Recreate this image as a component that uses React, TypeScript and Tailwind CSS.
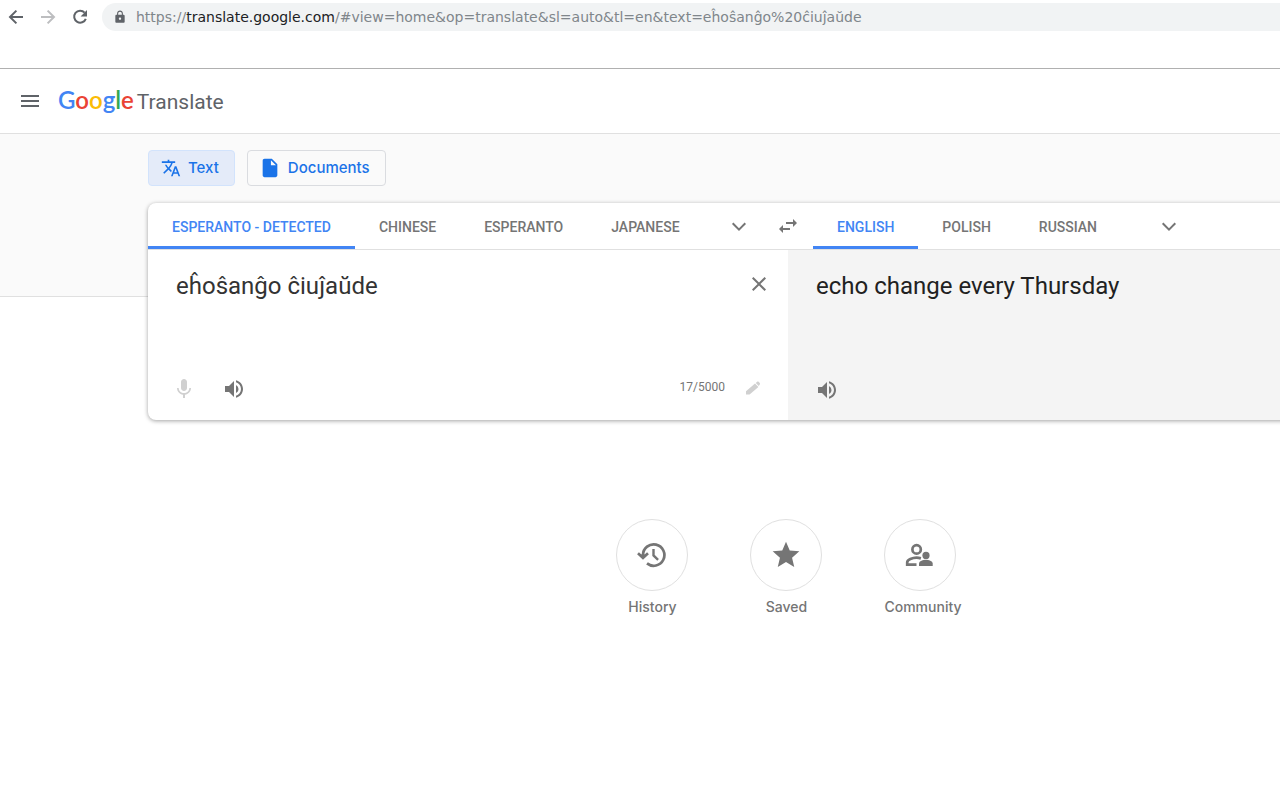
import React, { useState } from 'react';
import clsx from 'clsx';
import {
  MdClose,
  MdInsertDriveFile,
  MdLock,
  MdMenu,
  MdMic,
  MdStar,
  MdSwapHoriz,
  MdTranslate,
  MdVolumeUp,
} from 'react-icons/md';

const MAX_CHARS = 5000;

const sourceLanguages = ['Esperanto - detected', 'Chinese', 'Esperanto', 'Japanese'];
const targetLanguages = ['English', 'Polish', 'Russian'];

const logoLetters = [
  { char: 'G', color: 'text-[#4285f4]' },
  { char: 'o', color: 'text-[#ea4335]' },
  { char: 'o', color: 'text-[#fbbc05]' },
  { char: 'g', color: 'text-[#4285f4]' },
  { char: 'l', color: 'text-[#34a853]' },
  { char: 'e', color: 'text-[#ea4335]' },
];

function ArrowIcon({ className }: { className?: string }) {
  return (
    <svg viewBox="0 0 20 20" className={clsx('size-5', className)} fill="none" stroke="currentColor" strokeWidth="2">
      <path d="M17 10H4.5" />
      <path d="M10.4 3.6L4 10l6.4 6.4" />
    </svg>
  );
}

function ReloadIcon() {
  return (
    <svg viewBox="0 0 20 20" className="size-5" fill="none" stroke="currentColor" strokeWidth="2">
      <path d="M14.6 5.6A6 6 0 1 0 15.8 11.8" />
      <path d="M17 3v6.4h-6.4z" fill="currentColor" stroke="none" />
    </svg>
  );
}

function ChevronIcon() {
  return (
    <svg viewBox="0 0 24 24" className="size-6" fill="none" stroke="currentColor" strokeWidth="2">
      <path d="M5.7 9.3l6.3 6.3 6.3-6.3" />
    </svg>
  );
}

function PencilIcon() {
  return (
    <svg viewBox="0 0 18 18" className="size-[18px]" fill="currentColor">
      <path d="M2 12.2l9-7.6 3.4 3.4-8.8 7.6H2z" />
      <path d="M11.8 3.9l1.3-1.1c.6-.4 1.2-.3 1.7.2l.8.8c.5.5.6 1.1.2 1.7l-1 1.4z" />
    </svg>
  );
}

function HistoryIcon() {
  return (
    <svg viewBox="0 0 32 32" className="size-8" fill="none" stroke="currentColor" strokeWidth="2.7">
      <path d="M7 17v-1a10.7 10.7 0 1 1 4 8.4" />
      <path d="M2 14.2l5 4.6 5-4.6" />
      <path d="M17.5 10v6.4l4.6 4.4" strokeWidth="2.4" />
      <path d="M4 15.6h6l-3 3z" fill="currentColor" stroke="none" />
    </svg>
  );
}

function CommunityIcon() {
  return (
    <svg viewBox="1 0 32 32" className="size-8" fill="none" stroke="currentColor" strokeWidth="2.7">
      <circle cx="13.6" cy="10.4" r="4.2" />
      <path d="M13.5 25.6H4.2v-2.1c0-2.7 5.3-4.8 9.4-4.8 1.6 0 3 .3 4.3.7" />
      <circle cx="23" cy="16.4" r="3.6" fill="currentColor" stroke="none" />
      <path d="M16 26.9v-2.4c0-2.6 4.4-3.8 6.9-3.8s6.8 1.2 6.8 3.8v2.4z" fill="currentColor" stroke="none" />
    </svg>
  );
}

function BrowserBar() {
  return (
    <div className="h-[69px] border-b border-[#b0b0b0] pt-[3px]">
      <div className="flex h-7 items-center">
        <div className="flex w-[102px] shrink-0 gap-3 pl-1.5 text-[#5f6368]">
          <button aria-label="Back">
            <ArrowIcon />
          </button>
          <button aria-label="Forward" disabled className="text-[#bdbec0]">
            <ArrowIcon className="rotate-180" />
          </button>
          <button aria-label="Reload">
            <ReloadIcon />
          </button>
        </div>
        <div className="flex h-full flex-1 items-center gap-[9px] overflow-hidden rounded-l-full bg-[#f1f3f4] pl-[11px] font-['DejaVu_Sans',sans-serif] text-sm whitespace-nowrap text-[#80868b]">
          <MdLock className="size-3.5 text-[#5f6368]" />
          <span>
            https://<span className="text-[#202124]">translate.google.com</span>
            /#view=home&amp;op=translate&amp;sl=auto&amp;tl=en&amp;text=eĥoŝanĝo%20ĉiuĵaŭde
          </span>
        </div>
      </div>
    </div>
  );
}

function Header() {
  return (
    <header className="flex h-[65px] items-center border-b border-[#e0e0e0] pl-[18px] text-[#5f6368]">
      <button aria-label="Main menu">
        <MdMenu className="size-6" />
      </button>
      <a href="#" className="ml-4 flex items-baseline gap-[3px]">
        <span className="font-['Lato',sans-serif] text-2xl font-semibold">
          {logoLetters.map(({ char, color }, i) => (
            <span key={i} className={color}>
              {char}
            </span>
          ))}
        </span>
        <span className="text-[21px]">Translate</span>
      </a>
    </header>
  );
}

interface LanguageTabsProps {
  languages: string[];
  active: string;
  onSelect: (language: string) => void;
}

function LanguageTabs({ languages, active, onSelect }: LanguageTabsProps) {
  return (
    <div role="tablist" className="flex">
      {languages.map((language) => (
        <button
          key={language}
          role="tab"
          aria-selected={language === active}
          onClick={() => onSelect(language)}
          className={clsx(
            'border-b-3 px-6 pt-[5px] text-sm font-medium whitespace-nowrap uppercase',
            language === active ? 'border-[#4285f4] text-[#4285f4]' : 'border-transparent text-[#757575]'
          )}
        >
          {language}
        </button>
      ))}
    </div>
  );
}

interface ShortcutProps {
  label: string;
  children: React.ReactNode;
}

function Shortcut({ label, children }: ShortcutProps) {
  return (
    <button className="flex flex-col items-start text-[#757575]">
      <span className="flex size-[72px] items-center justify-center rounded-full border border-[#e0e0e0]">
        {children}
      </span>
      <span className="mt-1.5 min-w-[72px] text-center font-['Inter',sans-serif] text-sm font-medium">
        {label}
      </span>
    </button>
  );
}

export default function App() {
  const [text, setText] = useState('eĥoŝanĝo ĉiuĵaŭde');
  const [source, setSource] = useState(sourceLanguages[0]);
  const [target, setTarget] = useState(targetLanguages[0]);

  return (
    <div className="min-h-screen overflow-hidden bg-white font-['Roboto',sans-serif]">
      <BrowserBar />
      <Header />

      <main>
        {/* Mode switch */}
        <div className="flex h-[163px] items-start gap-3 border-b border-[#e0e0e0] bg-[#fafafa] pt-4 pl-[148px] font-['Inter',sans-serif] text-[15px] font-medium text-[#1a73e8]">
          <button className="flex h-9 items-center gap-[7px] rounded border border-[#d2e3fc] bg-[#e4ebf9] pr-[15px] pl-3">
            <MdTranslate className="size-5" />
            Text
          </button>
          <button className="flex h-9 items-center gap-[7px] rounded border border-[#dadce0] pr-[15px] pl-[11px]">
            <MdInsertDriveFile className="size-[22px]" />
            Documents
          </button>
        </div>

        {/* The translator runs past the right edge of the window */}
        <div className="-mt-[94px] -mr-[148px] ml-[148px]">
          <section className="rounded-lg bg-white shadow-[0_1px_4px_rgba(0,0,0,0.37)]">
            <div className="flex h-[47px] border-b border-[#e0e0e0]">
              <div className="flex w-[615px] shrink-0">
                <LanguageTabs languages={sourceLanguages} active={source} onSelect={setSource} />
                <button aria-label="More source languages" className="ml-[23px] text-[#757575]">
                  <ChevronIcon />
                </button>
              </div>
              <button aria-label="Swap languages" className="flex w-[50px] shrink-0 items-center justify-center text-[#757575]">
                <MdSwapHoriz className="size-6" />
              </button>
              <LanguageTabs languages={targetLanguages} active={target} onSelect={setTarget} />
              <button aria-label="More target languages" className="ml-9 text-[#757575]">
                <ChevronIcon />
              </button>
            </div>

            <div className="grid grid-cols-2">
              <div className="flex flex-col pl-7">
                <div className="flex items-start pt-5 pr-[17px]">
                  <textarea
                    aria-label="Source text"
                    value={text}
                    maxLength={MAX_CHARS}
                    rows={3}
                    spellCheck={false}
                    onChange={(e) => setText(e.target.value)}
                    className="h-24 flex-1 resize-none text-2xl text-[#333] outline-none"
                  />
                  <button aria-label="Clear source text" onClick={() => setText('')} className="mt-0.5 text-[#757575]">
                    <MdClose className="size-6" />
                  </button>
                </div>
                <div className="flex h-[54px] items-start pt-[11px] pr-[26px] -ml-1 text-[#757575]">
                  <button aria-label="Translate by voice" disabled className="text-[#d0d0d0]">
                    <MdMic className="size-6" />
                  </button>
                  <button aria-label="Listen to source text" className="ml-[26px]">
                    <MdVolumeUp className="size-6" />
                  </button>
                  <span className="mt-0.5 ml-auto text-xs">
                    {text.length}/{MAX_CHARS}
                  </span>
                  <button aria-label="Handwriting" className="mt-0.5 ml-[19px] text-[#d0d0d0]">
                    <PencilIcon />
                  </button>
                </div>
              </div>

              <div className="flex flex-col rounded-br-lg bg-[#f4f4f4] pt-5 pl-7">
                <p className="h-24 text-2xl text-[#212121]">echo change every Thursday</p>
                <button aria-label="Listen to translation" className="mt-3 -ml-px self-start text-[#757575]">
                  <MdVolumeUp className="size-6" />
                </button>
              </div>
            </div>
          </section>

          <nav className="mt-[99px] flex justify-center gap-[62px] pl-0.5">
            <Shortcut label="History">
              <HistoryIcon />
            </Shortcut>
            <Shortcut label="Saved">
              <MdStar className="size-8" />
            </Shortcut>
            <Shortcut label="Community">
              <CommunityIcon />
            </Shortcut>
          </nav>
        </div>
      </main>
    </div>
  );
}
